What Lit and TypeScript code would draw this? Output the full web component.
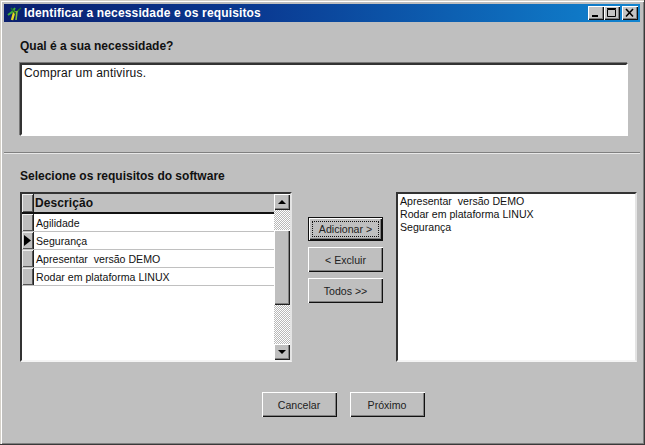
import { LitElement, html, css, svg } from "lit";
import { customElement } from "lit/decorators.js";

const FONT = css`"Liberation Sans", Arial, sans-serif`;

@customElement("app-root")
export class AppRoot extends LitElement {
  static styles = css`
    :host { display: block; width: 645px; height: 445px; overflow: hidden; font-family: ${FONT}; font-size: 12px; color: #111; }
    * { box-sizing: border-box; }
    .win { width: 645px; height: 445px; background: #bfbfbf; display: flex; flex-direction: column; padding: 4px;
      border-style: solid; border-width: 0 1px 1px 0; border-color: #3a3a3a; box-shadow: inset 1px 1px 0 #d4d0c8, inset 2px 2px 0 #fff, inset -1px -1px 0 #808080; }
    .title { height: 18px; flex: none; display: flex; align-items: center; padding: 0 2px 0 3px; gap: 1px;
      background: linear-gradient(90deg, #0a1f6e 0%, #0a3a92 40%, #1084d0 100%); color: #fff; }
    .title .icon { width: 16px; height: 16px; flex: none; display: block; }
    .title .txt { flex: 1; font: bold 12px ${FONT}; letter-spacing: 0.15px; white-space: nowrap; }
    .ctl { display: flex; }
    .ctl button { width: 16px; height: 14px; padding: 0; margin: 0; background: #c4c4c4; border: 0; display: block;
      box-shadow: inset 1px 1px 0 #fff, inset -1px -1px 0 #111, inset -2px -2px 0 #808080; }
    .ctl button svg { display: block; width: 16px; height: 14px; }
    .ctl .x { margin-left: 2px; }
    .top { height: 131px; flex: none; padding: 17px 12px 0 16px; border-bottom: 1px solid #808080; }
    .lbl { font-weight: bold; font-size: 12px; line-height: 14px; height: 24px; }
    .memo { height: 73px; background: #fff; padding: 1px 2px; font-size: 12px; line-height: 14px; letter-spacing: .2px;
      border: 2px solid; border-color: #333 #fff #fff #333; box-shadow: -1px -1px 0 #777; }
    .bottom { flex: 1; border-top: 1px solid #e8e8e8; padding: 15px 4px 0 16px; display: flex; flex-direction: column; }
    .lbl2 { height: 23px; }
    .mid { display: flex; height: 170px; }
    .grid { width: 272px; flex: none; background: #fff; display: flex;
      border: 2px solid; border-color: #333 #e4e4e4 #f4f4f4 #333; }
    .tbl { flex: 1; min-width: 0; display: flex; flex-direction: column; }
    .row { display: flex; height: 18px; border-bottom: 1px solid #c0c0c0; line-height: 19px; font-size: 10.6px; }
    .row.head { height: 20px; background: #c0c0c0; font-weight: bold; border-bottom: 2px solid #111; line-height: 17px; font-size: 12px; }
    .ind { width: 11px; flex: none; background: #bfbfbf; display: flex; align-items: center; justify-content: center;
      box-shadow: inset 1px 1px 0 #eee, inset -1px -1px 0 #555; }
    .cell { flex: 1; padding-left: 2px; white-space: pre; border-left: 1px solid #222; }
    .head .cell { padding: 1px 0 0 1px; letter-spacing: .1px; }
    .sb { width: 16px; flex: none; display: flex; flex-direction: column;
      background-color: #dcdcdc; background-image: conic-gradient(#b8b8b8 25%, #fff 0 50%, #b8b8b8 0 75%, #fff 0); background-size: 2px 2px; }
    .sbb { height: 16px; flex: none; background: #bfbfbf; display: block; box-shadow: inset 1px 1px 0 #fff, inset -1px -1px 0 #222, inset -2px -2px 0 #808080; }
    .thumb { height: 75px; margin-top: 20px; flex: none; background: #bfbfbf; box-shadow: inset 1px 1px 0 #fff, inset -1px -1px 0 #222, inset -2px -2px 0 #808080; }
    .sp { flex: 1; }
    .cmds { width: 104px; flex: none; display: flex; flex-direction: column; gap: 6px; padding: 25px 0 0 16px; }
    .btn { width: 75px; height: 25px; padding: 0; margin: 0; background: #bfbfbf; border: 0; font: 10.6px ${FONT}; color: #222; display: flex; align-items: center; justify-content: center;
      box-shadow: inset 1px 1px 0 #fff, inset -1px -1px 0 #111, inset -2px -2px 0 #808080; position: relative; }
    .btn.def { height: 24px; box-shadow: inset 0 0 0 1px #111, inset 2px 2px 0 #fff, inset -2px -2px 0 #111, inset -3px -3px 0 #808080; }
    .btn.def::after { content: ""; position: absolute; inset: 4px; border: 1px dotted #111; }
    .list { width: 241px; flex: none; background: #fff; padding: 1px 2px; line-height: 13px; white-space: pre; font-size: 10.6px;
      border: 2px solid; border-color: #333 #e4e4e4 #f4f4f4 #333; }
    .foot { display: flex; gap: 13px; justify-content: center; padding: 30px 0 0 0; margin-left: 30px; }
  `;

  private icon() {
    return svg`<svg class="icon" viewBox="0 0 16 16">
      <path d="M1 10 L5 7 L8 3" stroke="#3fae3a" stroke-width="2" fill="none"/>
      <path d="M5 15 L7 8 L8 6" stroke="#e8d820" stroke-width="2.4" fill="none"/>
      <path d="M4 3 L8 8 L14 3" stroke="#1c6e2c" stroke-width="1.6" fill="none"/>
      <path d="M9 15 L10 6" stroke="#7fc23a" stroke-width="1.6" fill="none"/>
    </svg>`;
  }

  render() {
    const rows = ["Agilidade", "Segurança", "Apresentar  versão DEMO", "Rodar em plataforma LINUX"];
    return html`
      <div class="win">
        <div class="title">
          ${this.icon()}
          <span class="txt">Identificar a necessidade e os requisitos</span>
          <div class="ctl">
            <button><svg viewBox="0 0 16 14"><rect x="4" y="9" width="6" height="2" fill="#000"/></svg></button>
            <button><svg viewBox="0 0 16 14"><path d="M3.5 3.5h8v7h-8z" fill="none" stroke="#000"/><path d="M3 2.5h9" stroke="#000"/></svg></button>
            <button class="x"><svg viewBox="0 0 16 14"><path d="M4 3l7 7.5M11 3l-7 7.5" stroke="#000" stroke-width="1.6"/></svg></button>
          </div>
        </div>
        <div class="top">
          <div class="lbl">Qual é a sua necessidade?</div>
          <div class="memo">Comprar um antivirus.</div>
        </div>
        <div class="bottom">
          <div class="lbl lbl2">Selecione os requisitos do software</div>
          <div class="mid">
            <div class="grid">
              <div class="tbl">
                <div class="row head"><div class="ind"></div><div class="cell">Descrição</div></div>
                ${rows.map((r, i) => html`<div class="row"><div class="ind">${i === 1 ? html`<svg width="7" height="11" viewBox="0 0 7 11"><path d="M0 0l7 5.5L0 11z" fill="#000"/></svg>` : ""}</div><div class="cell">${r}</div></div>`)}
              </div>
              <div class="sb">
                <svg class="sbb" viewBox="0 0 16 16"><path d="M4 10h8L8 6z" fill="#000"/></svg>
                <div class="thumb"></div>
                <div class="sp"></div>
                <svg class="sbb" viewBox="0 0 16 16"><path d="M4 6h8l-4 4z" fill="#000"/></svg>
              </div>
            </div>
            <div class="cmds">
              <button class="btn def">Adicionar &gt;</button>
              <button class="btn">&lt; Excluir</button>
              <button class="btn">Todos &gt;&gt;</button>
            </div>
            <div class="list">Apresentar  versão DEMO
Rodar em plataforma LINUX
Segurança</div>
          </div>
          <div class="foot">
            <button class="btn">Cancelar</button>
            <button class="btn">Próximo</button>
          </div>
        </div>
      </div>
    `;
  }
}
